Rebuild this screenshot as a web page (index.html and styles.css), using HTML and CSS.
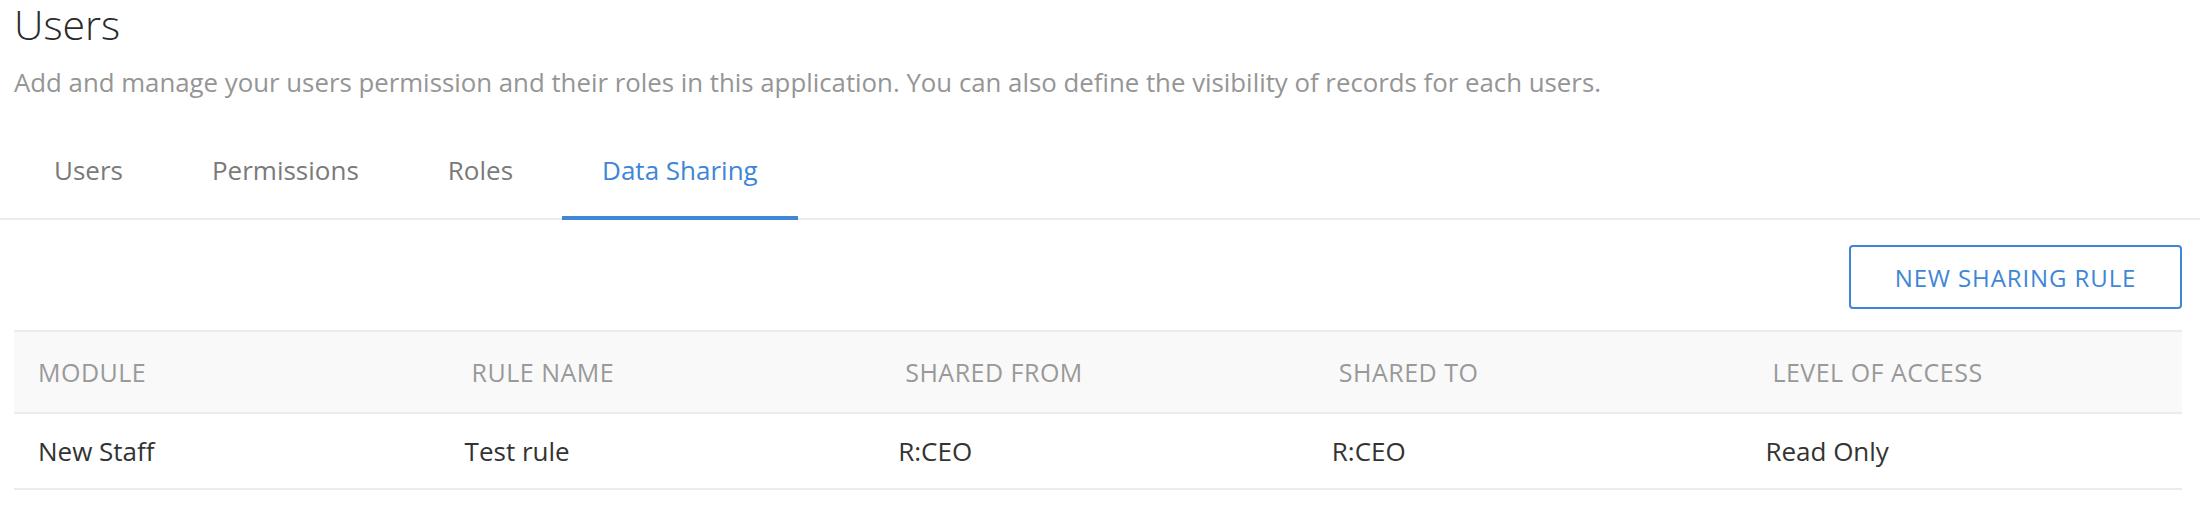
FILE: index.html
```html
<!DOCTYPE html>
<html lang="en">
<head>
<meta charset="utf-8">
<title>Users</title>
<link rel="stylesheet" href="styles.css">
</head>
<body>
<div class="page">
  <header class="intro">
    <h1 class="title">Users</h1>
    <p class="subtitle">Add and manage your users permission and their roles in this application. You can also define the visibility of records for each users.</p>
  </header>
  <nav class="tabs">
    <a class="tab">Users</a>
    <a class="tab">Permissions</a>
    <a class="tab">Roles</a>
    <a class="tab active">Data Sharing</a>
  </nav>
  <section class="content">
    <div class="toolbar">
      <button class="btn-outline">NEW SHARING RULE</button>
    </div>
    <table class="grid">
      <thead>
        <tr>
          <th>MODULE</th>
          <th>RULE NAME</th>
          <th>SHARED FROM</th>
          <th>SHARED TO</th>
          <th>LEVEL OF ACCESS</th>
        </tr>
      </thead>
      <tbody>
        <tr>
          <td>New Staff</td>
          <td>Test rule</td>
          <td>R:CEO</td>
          <td>R:CEO</td>
          <td>Read Only</td>
        </tr>
      </tbody>
    </table>
  </section>
</div>
</body>
</html>
```
FILE: styles.css
```css
* { box-sizing: border-box; }
html, body { margin: 0; padding: 0; background: #fff; }
body {
  font-family: "Open Sans", "Lato", "Liberation Sans", sans-serif;
  color: #333;
  width: 2200px;
}
.intro { padding: 0 18px 0 14px; }
.title {
  margin: 0;
  font-size: 41px;
  line-height: 48px;
  font-weight: 300;
  color: #2b2b2b;
}
.subtitle {
  margin: 18px 0 0;
  font-size: 25.8px;
  line-height: 32px;
  color: #959595;
  font-weight: 400;
}
.tabs {
  display: flex;
  gap: 9px;
  padding: 0 0 0 14px;
  border-bottom: 2px solid #ebebeb;
}
.tab {
  display: block;
  padding: 56px 40px 30px;
  font-size: 26px;
  line-height: 32px;
  color: #7a7a7a;
  border-bottom: 4px solid transparent;
  margin-bottom: -2px;
  cursor: pointer;
}
.tab.active {
  color: #3d86d8;
  border-bottom-color: #3d86d8;
}
.content { padding: 0 18px 0 14px; }
.toolbar {
  display: flex;
  justify-content: flex-end;
  margin-top: 25px;
}
.btn-outline {
  width: 333px;
  height: 64px;
  border: 2px solid #3d86d8;
  border-radius: 4px;
  background: #fff;
  color: #3d86d8;
  font-family: inherit;
  font-size: 24px;
  letter-spacing: 0.9px;
  cursor: pointer;
}
.grid {
  margin-top: 21px;
  width: 100%;
  table-layout: fixed;
  border-collapse: collapse;
}
.grid th {
  background: #f9f9f9;
  border-top: 2px solid #ececec;
  border-bottom: 2px solid #ececec;
  height: 82px;
  padding: 0 0 0 24px;
  text-align: left;
  vertical-align: middle;
  font-weight: 400;
  font-size: 25px;
  letter-spacing: 0.5px;
  color: #999;
}
.grid td {
  height: 76px;
  border-bottom: 2px solid #ececec;
  padding: 0 0 0 17px;
  vertical-align: middle;
  font-size: 26px;
  color: #333;
}
.grid td:first-child { padding-left: 24px; }
```
